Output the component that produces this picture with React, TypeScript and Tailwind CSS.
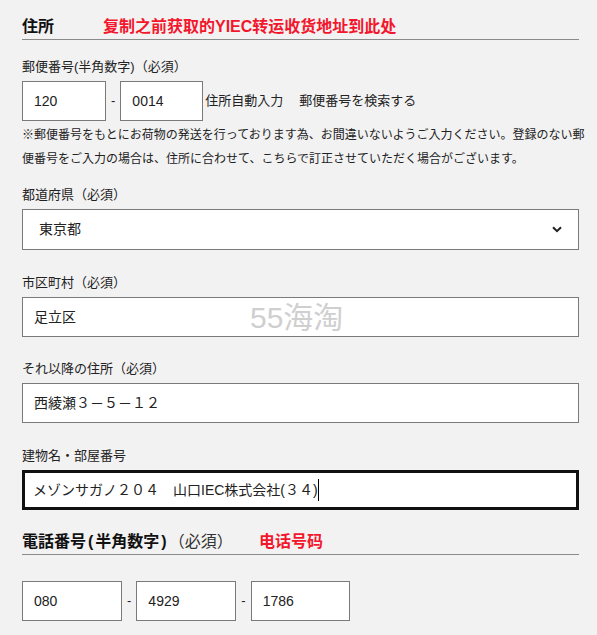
import React from 'react';

const JP = { fontFamily: '"Liberation Sans", "Noto Sans CJK JP", sans-serif' };
const SC = { fontFamily: '"Liberation Sans", "Noto Sans CJK SC", sans-serif' };

function Field({ children, className = '' }: { children: React.ReactNode; className?: string }) {
  return (
    <div
      className={`flex items-center h-[40px] bg-white border border-[#7a7a7a] pl-[11px] text-[14px] text-[#222] ${className}`}
    >
      {children}
    </div>
  );
}

function Label({ children }: { children: React.ReactNode }) {
  return <div className="text-[13px] leading-[18px] text-[#222] mb-[5px]">{children}</div>;
}

export default function App() {
  return (
    <div className="min-h-screen bg-[#f2f2f2] pl-[22px] pr-[18px] pt-[15px] pb-4" style={JP}>
      {/* ── 住所 heading ── */}
      <div className="flex items-end h-[25px] border-b border-[#8a8a8a]">
        <h2 className="font-bold text-[16px] leading-[24px] text-[#111] w-[81px]">住所</h2>
        <span className="font-bold text-[16px] leading-[24px] text-[#f3172d]" style={SC}>
          复制之前获取的YIEC转运收货地址到此处
        </span>
      </div>

      {/* ── 郵便番号 ── */}
      <div className="mt-[18px]">
        <Label>郵便番号(半角数字)（必須）</Label>
        <div className="flex items-center gap-[5px]">
          <Field className="w-[84px]">120</Field>
          <span className="text-[13px] text-[#222]">-</span>
          <Field className="w-[83px]">0014</Field>
          <span className="text-[13px] text-[#222] -ml-[3px]">住所自動入力</span>
          <span className="text-[13px] text-[#222] ml-[11px]">郵便番号を検索する</span>
        </div>
        <div className="pt-[2px] text-[12px] leading-[24px] text-[#222] whitespace-nowrap">
          <div>※郵便番号をもとにお荷物の発送を行っております為、お間違いないようご入力ください。登録のない郵</div>
          <div>便番号をご入力の場合は、住所に合わせて、こちらで訂正させていただく場合がございます。</div>
        </div>
      </div>

      {/* ── 都道府県 ── */}
      <div className="mt-[15px]">
        <Label>都道府県（必須）</Label>
        <div className="flex items-center justify-between h-[41px] bg-white border border-[#7a7a7a] pl-[16px] pr-[16px] text-[14px] text-[#222]">
          <span>東京都</span>
          <svg width="10" height="7" viewBox="0 0 10 7" fill="none">
            <path d="M1 1.2 L5 5.2 L9 1.2" stroke="#222" strokeWidth="2" />
          </svg>
        </div>
      </div>

      {/* ── 市区町村 ── */}
      <div className="mt-[24px]">
        <Label>市区町村（必須）</Label>
        <Field className="relative">
          <span>足立区</span>
          <span
            className="absolute left-[227px] top-1/2 -translate-y-1/2 text-[30px] font-normal text-[#cfcfcf] select-none"
            style={SC}
          >
            55海淘
          </span>
        </Field>
      </div>

      {/* ── それ以降の住所 ── */}
      <div className="mt-[23px]">
        <Label>それ以降の住所（必須）</Label>
        <Field>西綾瀬３－５－１２</Field>
      </div>

      {/* ── 建物名 ── */}
      <div className="mt-[24px]">
        <Label>建物名・部屋番号</Label>
        <div className="flex items-center h-[40px] bg-white border-[3px] border-[#111] pl-[8px] text-[14px] text-[#222]">
          <span>メゾンサガノ２０４　山口IEC株式会社(３４)</span>
          <span className="w-px h-[22px] bg-black" />
        </div>
      </div>

      {/* ── 電話番号 heading ── */}
      <div className="mt-[20px] flex items-end h-[25px] border-b border-[#8a8a8a]">
        <h2 className="text-[16px] leading-[24px] text-[#111] w-[237px]">
          <span className="font-bold">
            電話番号<span className="mx-[2px]">(</span>半角数字<span className="mx-[2px]">)</span>
          </span>
          <span className="text-[#333]">（必須）</span>
        </h2>
        <span className="font-bold text-[16px] leading-[24px] text-[#f3172d]" style={SC}>
          电话号码
        </span>
      </div>

      {/* ── 電話番号 inputs ── */}
      <div className="mt-[26px] flex items-center gap-[5px]">
        <Field className="w-[100px]">080</Field>
        <span className="text-[13px] text-[#222]">-</span>
        <Field className="w-[100px]">4929</Field>
        <span className="text-[13px] text-[#222]">-</span>
        <Field className="w-[99px]">1786</Field>
      </div>
    </div>
  );
}
